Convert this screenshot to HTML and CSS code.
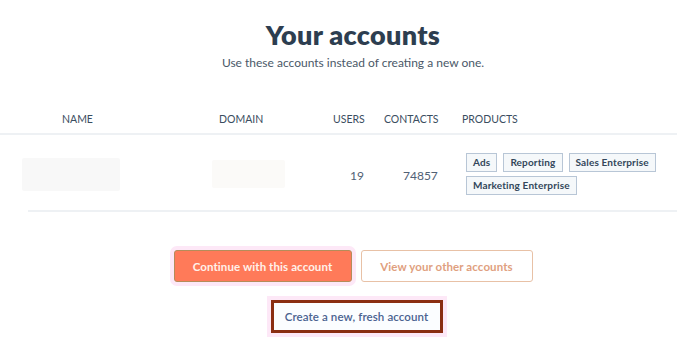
FILE: index.html
```html
<!DOCTYPE html>
<html lang="en">
<head>
<meta charset="utf-8">
<title>Your accounts</title>
<link rel="stylesheet" href="styles.css">
</head>
<body>
<main class="page">
  <header class="intro">
    <h1 class="title">Your accounts</h1>
    <p class="subtitle">Use these accounts instead of creating a new one.</p>
  </header>

  <section class="table">
    <div class="row head">
      <div class="cell c-name">NAME</div>
      <div class="cell c-domain">DOMAIN</div>
      <div class="cell c-users">USERS</div>
      <div class="cell c-contacts">CONTACTS</div>
      <div class="cell c-products">PRODUCTS</div>
    </div>
    <div class="row body">
      <div class="cell c-name"><span class="blur blur-name"></span></div>
      <div class="cell c-domain"><span class="blur blur-domain"></span></div>
      <div class="cell c-users num">19</div>
      <div class="cell c-contacts num">74857</div>
      <div class="cell c-products">
        <div class="tags">
          <span class="tag">Ads</span>
          <span class="tag">Reporting</span>
          <span class="tag">Sales Enterprise</span>
          <span class="tag">Marketing Enterprise</span>
        </div>
      </div>
    </div>
  </section>

  <section class="actions">
    <div class="btn-row">
      <button class="btn btn-primary halo">Continue with this account</button>
      <button class="btn btn-secondary">View your other accounts</button>
    </div>
    <div class="btn-row">
      <button class="btn btn-create halo">Create a new, fresh account</button>
    </div>
  </section>
</main>
</body>
</html>
```

FILE: styles.css
```css
* { box-sizing: border-box; }

html, body {
  margin: 0;
  padding: 0;
  background: #ffffff;
}

body {
  font-family: Lato, "Open Sans", sans-serif;
  color: #33475b;
  width: 688px;
  height: 344px;
  overflow: hidden;
}

.page {
  width: 688px;
}

.intro {
  padding-left: 18px;
  text-align: center;
}

.title {
  margin: 19px 0 0;
  font-size: 27px;
  line-height: 32px;
  font-weight: 800;
  color: #2d3e50;
  letter-spacing: 0.3px;
}

.subtitle {
  margin: 4px 0 0;
  font-size: 12px;
  line-height: 16px;
  color: #4a5868;
  letter-spacing: 0;
}

.table {
  width: 677px;
  margin-top: 33px;
}

.row {
  display: grid;
  grid-template-columns: 197px 114px 51px 78px 1fr;
  padding-left: 22px;
}

.row.head {
  height: 31px;
  border-bottom: 2px solid #eef1f4;
  font-size: 10.5px;
  line-height: 30px;
  letter-spacing: 0;
  color: #3a4d60;
}

.row.head .c-name { padding-left: 40px; }

.row.body {
  height: 77px;
  align-items: center;
  position: relative;
}

.row.body::after {
  content: "";
  position: absolute;
  left: 28px;
  right: 0;
  bottom: 0;
  height: 2px;
  background: #eef1f4;
}

.blur {
  display: block;
  background: #f8f8f8;
  border-radius: 2px;
}

.blur-name {
  width: 98px;
  height: 33px;
  margin-top: 2px;
}

.blur-domain {
  width: 73px;
  height: 28px;
  margin-left: -7px;
  background: #fbfaf8;
}

.num {
  font-size: 12px;
  color: #516175;
  padding-top: 4px;
}

.c-users.num { padding-left: 17px; }
.c-contacts.num { padding-left: 19px; }

.tags {
  display: flex;
  flex-wrap: wrap;
  gap: 4px 6px;
  padding-left: 4px;
  width: 215px;
}

.tag {
  display: inline-flex;
  align-items: center;
  height: 19px;
  padding: 0 6px;
  background: #f5f8fa;
  border: 1px solid #b8c6d6;
  font-size: 10px;
  font-weight: 700;
  color: #33475b;
  letter-spacing: 0.15px;
}

.actions {
  padding-left: 18px;
  margin-top: 38px;
  display: flex;
  flex-direction: column;
  align-items: center;
  gap: 18px;
}

.btn-row {
  display: flex;
  gap: 9px;
  justify-content: center;
}

.btn {
  font-family: Lato, "Open Sans", sans-serif;
  height: 32px;
  border-radius: 3px;
  font-size: 11.5px;
  letter-spacing: 0.1px;
  white-space: nowrap;
  padding: 0;
  cursor: pointer;
}

.halo {
  box-shadow: 0 0 0 4px #fde8f7;
}

.btn-primary {
  width: 178px;
  background: #ff7a59;
  border: 1px solid #b58c5a;
  color: #fff1ea;
  font-weight: 700;
}

.btn-secondary {
  width: 172px;
  background: #ffffff;
  border: 1px solid #e8c1a6;
  color: #df9f80;
  font-weight: 700;
}

.btn-create {
  width: 172px;
  height: 33px;
  margin-left: 7px;
  border-radius: 0;
  background: #fbfdff;
  border: 3px solid #8a2e12;
  color: #4a6290;
  font-size: 11.5px;
  font-weight: 600;
}
```
